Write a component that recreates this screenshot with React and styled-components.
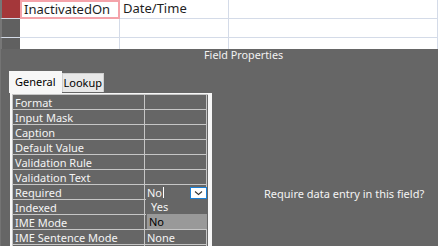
import styled, { createGlobalStyle } from "styled-components";

const Global = createGlobalStyle`
  html, body {
    margin: 0;
    padding: 0;
    background: #666666;
    overflow: hidden;
  }
  body {
    font-family: "Noto Sans", "Open Sans", sans-serif;
  }
`;

const Screen = styled.div`
  width: 438px;
  height: 246px;
  display: flex;
  flex-direction: column;
  overflow: hidden;
`;

const Grid = styled.div`
  flex-shrink: 0;
  height: 49px;
  background: #ffffff;
  display: grid;
  grid-template-columns: 20px 100px 109px 1fr;
  grid-template-rows: 19px 19px 19px;
  overflow: hidden;
`;

const Selector = styled.div`
  background: ${(p) => (p.$current ? "#a4373a" : "#606060")};
  border-left: 2px solid #777777;
  border-bottom: 1px solid #d4dbe8;
`;

const Cell = styled.div`
  border-right: 1px solid #d4dbe8;
  border-bottom: 1px solid #d4dbe8;
  box-sizing: border-box;
  padding-left: 3px;
  font-size: 13px;
  line-height: 17px;
  color: #1e1e1e;
  white-space: nowrap;
  ${(p) => p.$focus && "border: 2px solid #f4a3aa; padding-left: 2px; line-height: 15px;"}
`;

const Band = styled.div`
  flex: 1;
  min-height: 0;
  display: flex;
  flex-direction: column;
  border-left: 1px solid #747474;
`;

const Title = styled.div`
  flex-shrink: 0;
  height: 23px;
  padding-left: 203px;
  color: #f2f2f2;
  font-size: 10.8px;
  line-height: 12px;
`;

const Body = styled.div`
  display: flex;
  flex: 1;
  min-height: 0;
`;

const Pane = styled.div`
  width: 203px;
  margin-left: 8px;
  display: flex;
  flex-direction: column;
`;

const Tabs = styled.div`
  flex-shrink: 0;
  display: flex;
  align-items: flex-end;
  height: 21px;
`;

const Tab = styled.div`
  box-sizing: border-box;
  height: ${(p) => (p.$active ? "22px" : "19px")};
  padding: 0 ${(p) => (p.$active ? "5px" : "1px")};
  background: ${(p) => (p.$active ? "#f7f7f7" : "#e8e8e8")};
  border: 1px solid ${(p) => (p.$active ? "#f7f7f7" : "#cfcfcf")};
  border-bottom: none;
  color: #000;
  font-size: 11px;
  line-height: ${(p) => (p.$active ? "20px" : "18px")};
  margin-bottom: ${(p) => (p.$active ? "0" : "1px")};
`;

const Frame = styled.div`
  position: relative;
  flex: 1;
  margin-left: 1px;
  background: #f7f7f7;
  padding: 1px 4px 0 2px;
`;

const Table = styled.div`
  display: grid;
  grid-template-columns: 132px 62px;
  grid-auto-rows: 15px;
  border-top: 1px solid #c6c6c6;
  border-left: 1px solid #c6c6c6;
  background: #666666;
`;

const PropCell = styled.div`
  box-sizing: border-box;
  border-right: 1px solid #c6c6c6;
  border-bottom: 1px solid #c6c6c6;
  padding-left: 2px;
  color: #f4f4f4;
  font-size: 11px;
  line-height: 15px;
  white-space: nowrap;
  overflow: hidden;
`;

const Caret = styled.span`
  display: inline-block;
  width: 1px;
  height: 11px;
  background: #ffffff;
  vertical-align: -1px;
  margin-left: 1px;
`;

const DropButton = styled.div`
  position: absolute;
  left: 180px;
  top: 94px;
  width: 17px;
  height: 12px;
  box-sizing: border-box;
  background: #ffffff;
  border: 1px solid #1a7fd6;
  display: flex;
  align-items: center;
  justify-content: center;
`;

const List = styled.div`
  position: absolute;
  left: 136px;
  top: 106px;
  width: 61px;
  height: 30px;
  background: #666666;
  display: flex;
  flex-direction: column;
`;

const Option = styled.div`
  height: 15px;
  margin-left: 1px;
  padding-left: ${(p) => (p.$selected ? "2px" : "4px")};
  background: ${(p) => (p.$selected ? "#999999" : "transparent")};
  color: ${(p) => (p.$selected ? "#000000" : "#f4f4f4")};
  font-size: 11px;
  line-height: 15px;
`;

const Help = styled.div`
  flex: 1;
  padding: 114px 0 0 52px;
  color: #f4f4f4;
  font-size: 11px;
  white-space: nowrap;
`;

const props = [
  ["Format", ""],
  ["Input Mask", ""],
  ["Caption", ""],
  ["Default Value", ""],
  ["Validation Rule", ""],
  ["Validation Text", ""],
  ["Required", "No"],
  ["Indexed", ""],
  ["IME Mode", ""],
  ["IME Sentence Mode", "None"],
  ["", ""],
];

function App() {
  return (
    <Screen>
      <Global />
      <Grid>
        <Selector $current />
        <Cell $focus>InactivatedOn</Cell>
        <Cell>Date/Time</Cell>
        <Cell />
        {[0, 1].map((r) => [
          <Selector key={"s" + r} />,
          <Cell key={"a" + r} />,
          <Cell key={"b" + r} />,
          <Cell key={"c" + r} />,
        ])}
      </Grid>
      <Band>
        <Title>Field Properties</Title>
        <Body>
          <Pane>
            <Tabs>
              <Tab $active>General</Tab>
              <Tab>Lookup</Tab>
            </Tabs>
            <Frame>
              <Table>
                {props.map(([name, value], i) => [
                  <PropCell key={"n" + i}>{name}</PropCell>,
                  <PropCell key={"v" + i}>
                    {value}
                    {name === "Required" && <Caret />}
                  </PropCell>,
                ])}
              </Table>
              <DropButton>
                <svg width="9" height="6" viewBox="0 0 9 6">
                  <path d="M1 1.5 L4.5 4.5 L8 1.5" fill="none" stroke="#333" strokeWidth="1.1" />
                </svg>
              </DropButton>
              <List>
                <Option>Yes</Option>
                <Option $selected>No</Option>
              </List>
            </Frame>
          </Pane>
          <Help>Require data entry in this field?</Help>
        </Body>
      </Band>
    </Screen>
  );
}

export default App;
